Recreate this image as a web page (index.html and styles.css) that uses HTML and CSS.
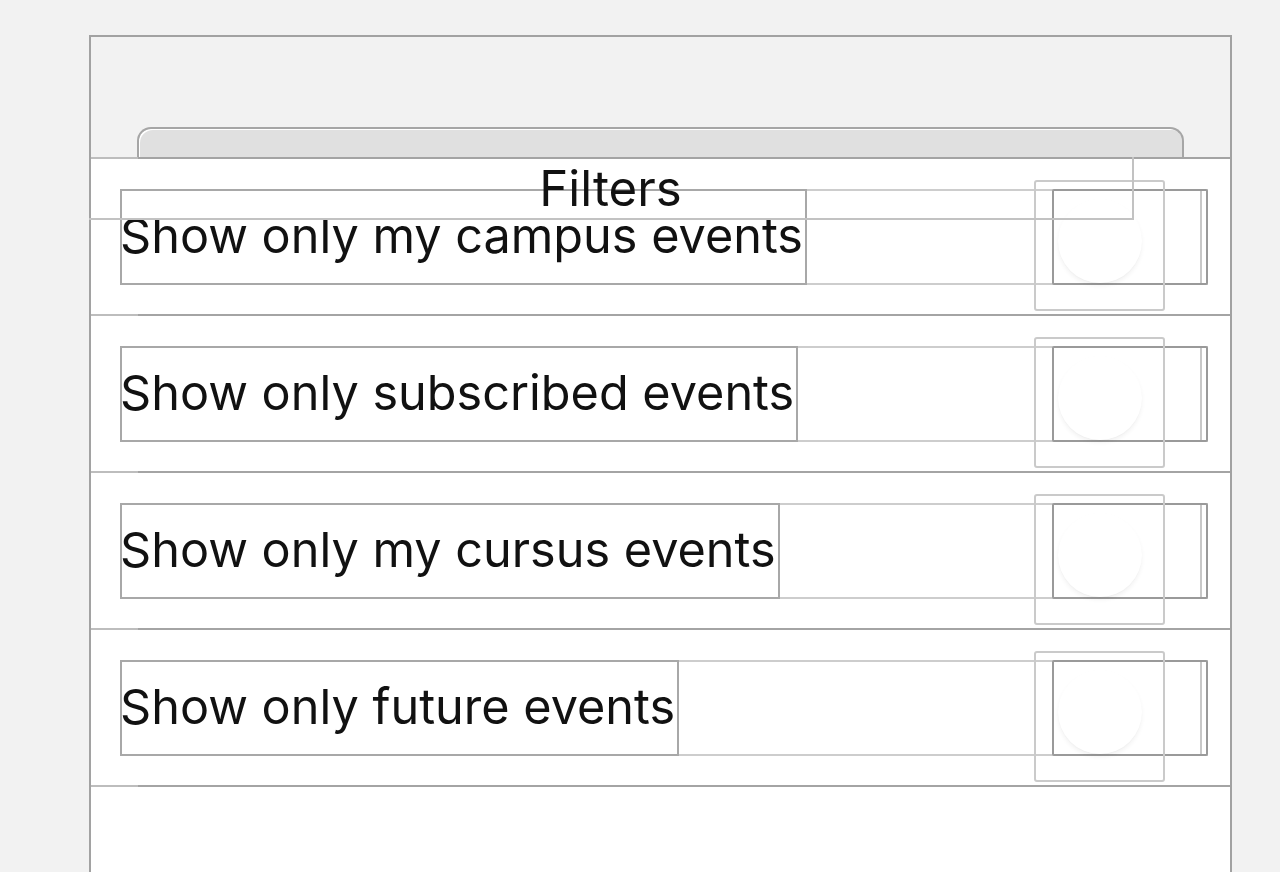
FILE: index.html
```html
<!DOCTYPE html>
<html>
<head>
<meta charset="utf-8">
<link rel="stylesheet" href="styles.css">
</head>
<body>
<div class="frame">
  <div class="header">
    <div class="grabber"></div>
  </div>
  <div class="sheet">
    <div class="title-box"><span class="title">Filters</span></div>
    <div class="row">
      <div class="sep"></div>
      <div class="row-body">
        <div class="stack">
          <div class="label"><span>Show only my campus events</span></div>
          <div class="switch"><div class="switch-outer"></div><div class="thumb"></div></div>
        </div>
      </div>
    </div>
    <div class="row">
      <div class="sep"></div>
      <div class="row-body">
        <div class="stack">
          <div class="label"><span>Show only subscribed events</span></div>
          <div class="switch"><div class="switch-outer"></div><div class="thumb"></div></div>
        </div>
      </div>
    </div>
    <div class="row">
      <div class="sep"></div>
      <div class="row-body">
        <div class="stack">
          <div class="label"><span>Show only my cursus events</span></div>
          <div class="switch"><div class="switch-outer"></div><div class="thumb"></div></div>
        </div>
      </div>
    </div>
    <div class="row">
      <div class="sep"></div>
      <div class="row-body">
        <div class="stack">
          <div class="label"><span>Show only future events</span></div>
          <div class="switch"><div class="switch-outer"></div><div class="thumb"></div></div>
        </div>
      </div>
    </div>
    <div class="row last">
      <div class="sep"></div>
    </div>
  </div>
</div>
</body>
</html>
```
FILE: styles.css
```css
html, body {
  margin: 0;
  padding: 0;
  height: 872px;
  overflow: hidden;
  background: #f2f2f2;
  font-family: "Inter", "Liberation Sans", Arial, sans-serif;
}

.frame {
  margin: 35px 0 0 89px;
  width: 1143px;
  height: 837px;
  box-sizing: border-box;
  border: 2px solid #a2a2a2;
  border-bottom: none;
  display: flex;
  flex-direction: column;
}

.header {
  height: 120px;
  display: flex;
  flex-direction: column;
  justify-content: flex-end;
  padding: 0 46px;
  background: #f2f2f2;
}

.grabber {
  height: 30px;
  box-sizing: border-box;
  background: #e0e0e0;
  border: 2px solid #a6a6a6;
  border-bottom: none;
  border-radius: 14px 14px 0 0;
  box-shadow: inset 2px 2px 0 -1px #ffffff;
}

.sheet {
  flex: 1;
  background: #ffffff;
  position: relative;
  display: flex;
  flex-direction: column;
}

.title-box {
  position: absolute;
  left: -2px;
  top: 0;
  width: 1045px;
  height: 63px;
  box-sizing: border-box;
  border-right: 2px solid #c2c2c2;
  border-bottom: 2px solid #c2c2c2;
  display: flex;
  align-items: center;
  justify-content: center;
  z-index: 2;
}

.title {
  font-size: 49.2px;
  color: #111111;
  line-height: 1;
  margin-top: 2px;
}

.row {
  height: 157px;
  display: flex;
  flex-direction: column;
}

.row.last {
  flex: 1;
}

.sep {
  height: 2px;
  flex: none;
  background: linear-gradient(to right, #bdbdbd 47px, #a4a4a4 47px);
}

.row-body {
  flex: 1;
  display: flex;
  align-items: center;
  padding: 0 22px 0 29px;
}

.stack {
  flex: 1;
  height: 96px;
  display: flex;
  justify-content: space-between;
  box-shadow: inset 0 0 0 2px #cdcdcd;
}

.label {
  box-sizing: border-box;
  height: 96px;
  border: 2px solid #a8a8a8;
  display: flex;
  align-items: center;
}

.label span {
  font-size: 48.6px;
  color: #111111;
  line-height: 1;
  margin-left: -2px;
  margin-right: 2px;
  white-space: nowrap;
}

.switch {
  position: relative;
  width: 156px;
  height: 96px;
  box-sizing: border-box;
  border: 2px solid #9a9a9a;
  border-radius: 2px;
  box-shadow: inset -4px 0 0 #ffffff, inset -6px 0 0 #c8c8c8;
}

.switch-outer {
  position: absolute;
  left: -20px;
  top: -11px;
  width: 131px;
  height: 131px;
  box-sizing: border-box;
  border: 2px solid #cacaca;
  border-radius: 3px;
}

.thumb {
  position: absolute;
  left: 4px;
  top: 8px;
  width: 84px;
  height: 84px;
  border-radius: 50%;
  background: #ffffff;
  box-shadow: 0 3px 4px rgba(0, 0, 0, 0.05), 0 1px 1px rgba(0, 0, 0, 0.02);
}
```
